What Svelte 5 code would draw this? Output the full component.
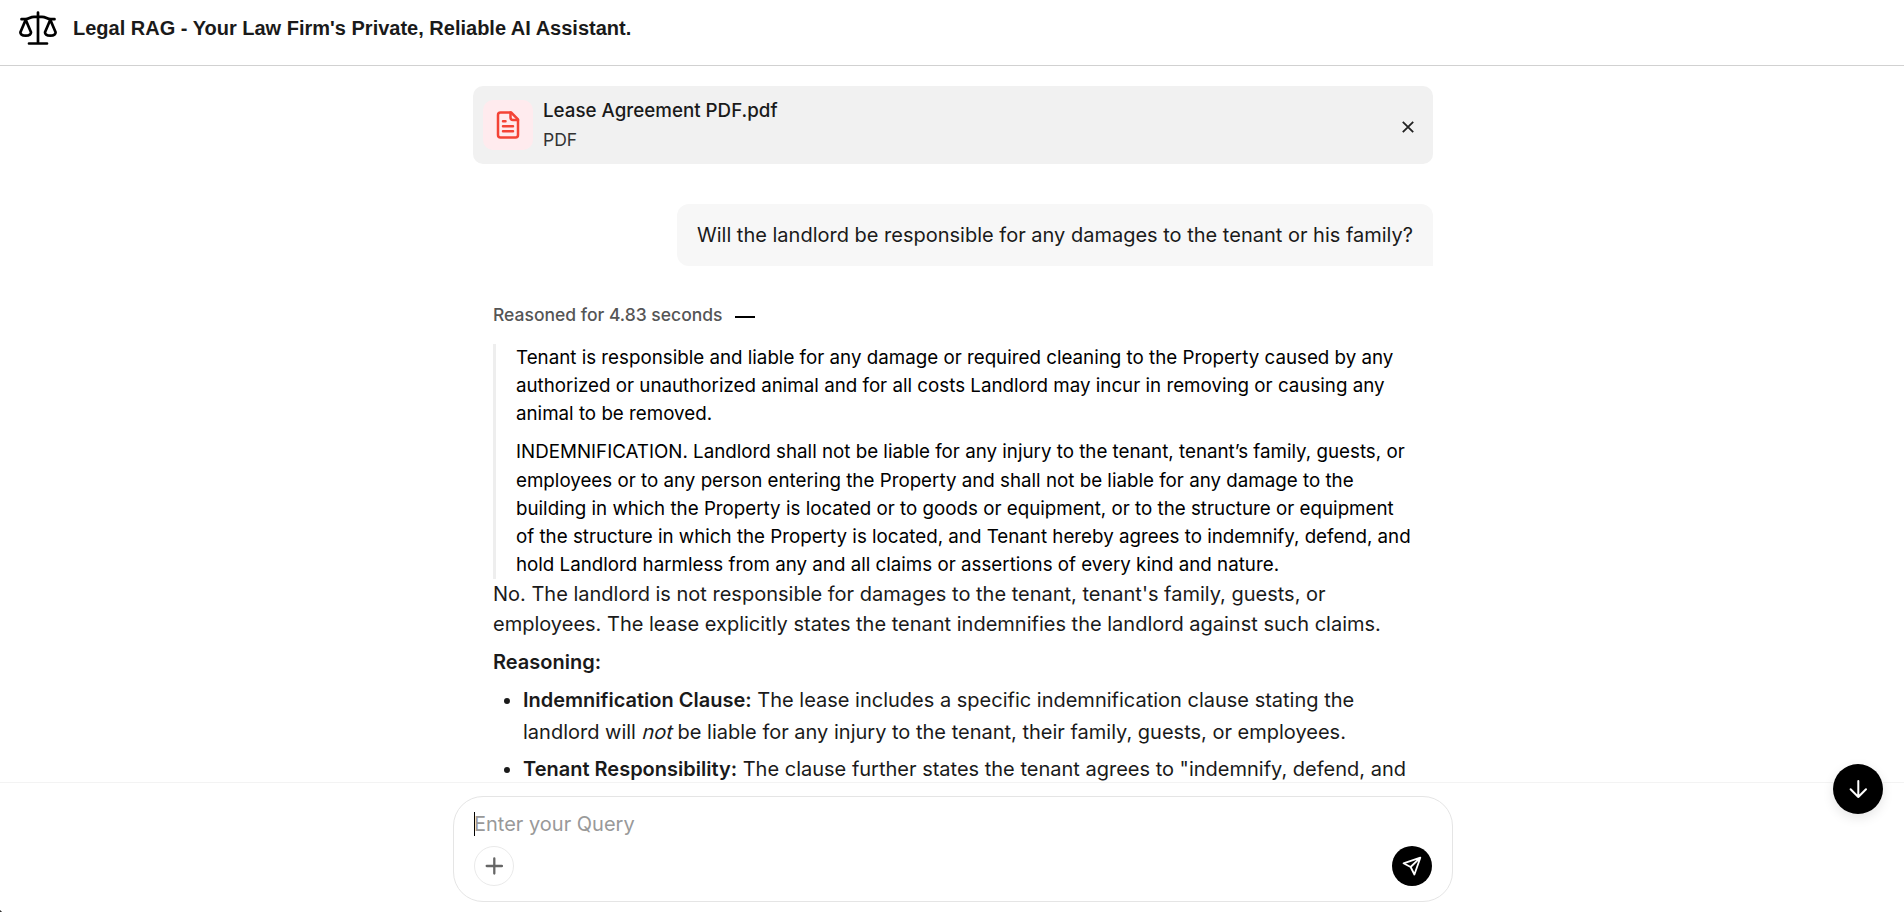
<script>
  const file = { name: 'Lease Agreement PDF.pdf', type: 'PDF' };
  const question = 'Will the landlord be responsible for any damages to the tenant or his family?';
  const quotes = [
    'Tenant is responsible and liable for any damage or required cleaning to the Property caused by any authorized or unauthorized animal and for all costs Landlord may incur in removing or causing any animal to be removed.',
    'INDEMNIFICATION. Landlord shall not be liable for any injury to the tenant, tenant’s family, guests, or employees or to any person entering the Property and shall not be liable for any damage to the building in which the Property is located or to goods or equipment, or to the structure or equipment of the structure in which the Property is located, and Tenant hereby agrees to indemnify, defend, and hold Landlord harmless from any and all claims or assertions of every kind and nature.'
  ];
</script>

<div class="page">
  <header>
    <svg class="logo" width="40" height="36" viewBox="0 0 40 36" fill="none" stroke="#000" stroke-width="2.7" stroke-linecap="round" stroke-linejoin="round">
      <path d="M20 2.500v31M11 33.500h18" />
      <path d="M3.500 9.200h3.700C11 9.200 12 6.800 16 6.800h8c4 0 5 2.400 8.800 2.400h3.700" />
      <path d="M7.700 9.800 2.400 22.200c0 2.300 2.400 3.400 5.300 3.400s5.300-1.100 5.300-3.400z" />
      <path d="M32.300 9.800 27 22.200c0 2.300 2.400 3.400 5.300 3.400s5.300-1.100 5.300-3.400z" />
    </svg>
    <h1>Legal RAG - Your Law Firm's Private, Reliable AI Assistant.</h1>
  </header>

  <main>
    <div class="file">
      <div class="badge">
        <svg width="30" height="30" viewBox="0 0 24 24" fill="none" stroke="#f44336" stroke-width="2" stroke-linecap="round" stroke-linejoin="round">
          <path d="M14.500 2H6a2 2 0 0 0-2 2v16a2 2 0 0 0 2 2h12a2 2 0 0 0 2-2V7.500z" />
          <path d="M14 2v4a2 2 0 0 0 2 2h4M10 9H8M16 13H8M16 17H8" />
        </svg>
      </div>
      <div class="meta">
        <div class="name">{file.name}</div>
        <div class="type">{file.type}</div>
      </div>
      <button class="close" aria-label="Remove file">
        <svg width="12" height="12" viewBox="0 0 12 12" stroke="#222" stroke-width="1.8"><path d="M.8.8l10.400 10.400M11.200.8L.8 11.200" /></svg>
      </button>
    </div>

    <div class="question">{question}</div>

    <section class="answer">
      <div class="reasoned"><span>Reasoned for 4.83 seconds</span><i class="dash"></i></div>
      <blockquote>
        {#each quotes as quote}<p>{quote}</p>{/each}
      </blockquote>
      <p>No. The landlord is not responsible for damages to the tenant, tenant's family, guests, or employees. The lease explicitly states the tenant indemnifies the landlord against such claims.</p>
      <p class="heading"><strong>Reasoning:</strong></p>
      <ul>
        <li><strong>Indemnification Clause:</strong> The lease includes a specific indemnification clause stating the landlord will <em>not</em> be liable for any injury to the tenant, their family, guests, or employees.</li>
        <li><strong>Tenant Responsibility:</strong> The clause further states the tenant agrees to "indemnify, defend, and</li>
      </ul>
    </section>
  </main>

  <footer>
    <div class="composer">
      <div class="field"><i class="caret"></i>Enter your Query</div>
      <div class="actions">
        <button class="add" aria-label="Attach">
          <svg width="18" height="18" viewBox="0 0 18 18" stroke="#666" stroke-width="2.300" stroke-linecap="round"><path d="M9.300 1.400v15.200M1.700 9h15.200" /></svg>
        </button>
        <button class="send" aria-label="Send">
          <svg width="40" height="40" viewBox="0 0 40 40" fill="none" stroke="#fff" stroke-width="1.8" stroke-linejoin="round" stroke-linecap="round">
            <path d="M28.300 11.700 11.500 17.300l7.100 3.700 3.800 7.500zM28.300 11.700 18.600 21" />
          </svg>
        </button>
      </div>
    </div>
  </footer>

  <button class="down" aria-label="Scroll to bottom">
    <svg width="20" height="20" viewBox="0 0 20 20" fill="none" stroke="#fff" stroke-width="2" stroke-linecap="round" stroke-linejoin="round"><path d="M10.300 2v16M2.600 10.200 10.300 18l7.700-7.800" /></svg>
  </button>
</div>

<style>
  :global(body) { margin: 0; background: #fff; }
  .page {
    position: relative;
    display: flex;
    flex-direction: column;
    height: 912px;
    overflow: hidden;
    background: #fff;
    color: #1a1a1a;
    font: 400 20px/30px Inter, sans-serif;
  }
  .page::after {
    content: "";
    position: absolute;
    left: 0;
    bottom: 0;
    width: 4px;
    height: 4px;
    background: radial-gradient(circle at 100% 0, transparent 4px, #333 4.500px);
  }
  header {
    display: flex;
    flex: none;
    box-sizing: border-box;
    height: 66px;
    padding: 10px 0 0 18px;
    gap: 15px;
    border-bottom: 1px solid #d1d1d1;
  }
  .logo { display: block; flex: none; }
  h1 { margin: 3px 0 0; font: 700 20px/30px "Liberation Sans", Arial, sans-serif; }
  main { flex: 1; min-height: 0; overflow: hidden; width: 960px; margin: 0 auto; padding: 20px 0 0 2px; box-sizing: content-box; display: flex; flex-direction: column; }
  .file {
    display: flex;
    flex: none;
    align-items: center;
    box-sizing: border-box;
    height: 78px;
    padding: 0 11px 0 10px;
    gap: 10px;
    border-radius: 10px;
    background: #f1f1f1;
  }
  .badge { display: grid; place-items: center; width: 50px; height: 50px; border-radius: 10px; background: #ffebee; }
  .badge svg { display: block; }
  .meta { flex: 1; }
  .name { font-size: 18.75px; font-weight: 500; line-height: 30px; }
  .type { font-size: 17.5px; line-height: 28px; color: #333; }
  button { display: grid; place-items: center; padding: 0; border: 0; background: none; }
  .close { width: 28px; height: 28px; margin-top: 3px; }
  .question {
    align-self: flex-end;
    flex: none;
    margin-top: 40px;
    padding: 16px 20px;
    border-radius: 12px 12px 0 12px;
    background: #f7f7f7;
  }
  .answer { padding: 35px 20px 0; }
  .reasoned { display: flex; align-items: center; height: 28px; gap: 12.500px; font-size: 17.5px; font-weight: 500; color: #555; }
  .dash { width: 20px; height: 2px; margin-top: 3px; background: #000; }
  blockquote {
    margin: 15px 0 0;
    padding-left: 20px;
    border-left: 3px solid #eee;
    font-size: 18.75px;
    line-height: 28.125px;
    color: #000;
  }
  p { margin: 0; }
  blockquote p + p { margin-top: 10px; }
  .heading { margin-top: 7.500px; }
  strong { font-weight: 600; }
  em { display: inline-block; line-height: 1; font-style: normal; transform: translateX(1px) skewX(-14deg); }
  ul { margin: 7.500px 0 0; padding-left: 30px; line-height: 32px; }
  li + li { margin-top: 5px; }
  footer {
    flex: none;
    box-sizing: border-box;
    height: 130px;
    padding-top: 13px;
    border-top: 1px solid #f3f3f3;
    background: #fff;
  }
  .composer {
    box-sizing: border-box;
    width: 1000px;
    height: 106px;
    margin: 0 auto;
    padding: 12px 20px 0;
    border: 1px solid #e5e5e5;
    border-radius: 30px;
    transform: translateX(1px);
  }
  .field { display: flex; align-items: center; height: 30px; color: #999; }
  .caret { width: 1px; height: 24px; margin-right: -1px; background: #000; }
  .actions { display: flex; justify-content: space-between; margin-top: 7px; }
  .add { box-sizing: border-box; width: 40px; height: 40px; border: 1px solid #eaeaea; border-radius: 50%; }
  .send { width: 40px; height: 40px; border-radius: 50%; background: #000; }
  .down {
    position: absolute;
    right: 21px;
    bottom: 98px;
    width: 50px;
    height: 50px;
    border-radius: 50%;
    background: #000;
    box-shadow: 0 4px 12px rgba(0, 0, 0, 0.1);
  }
</style>
